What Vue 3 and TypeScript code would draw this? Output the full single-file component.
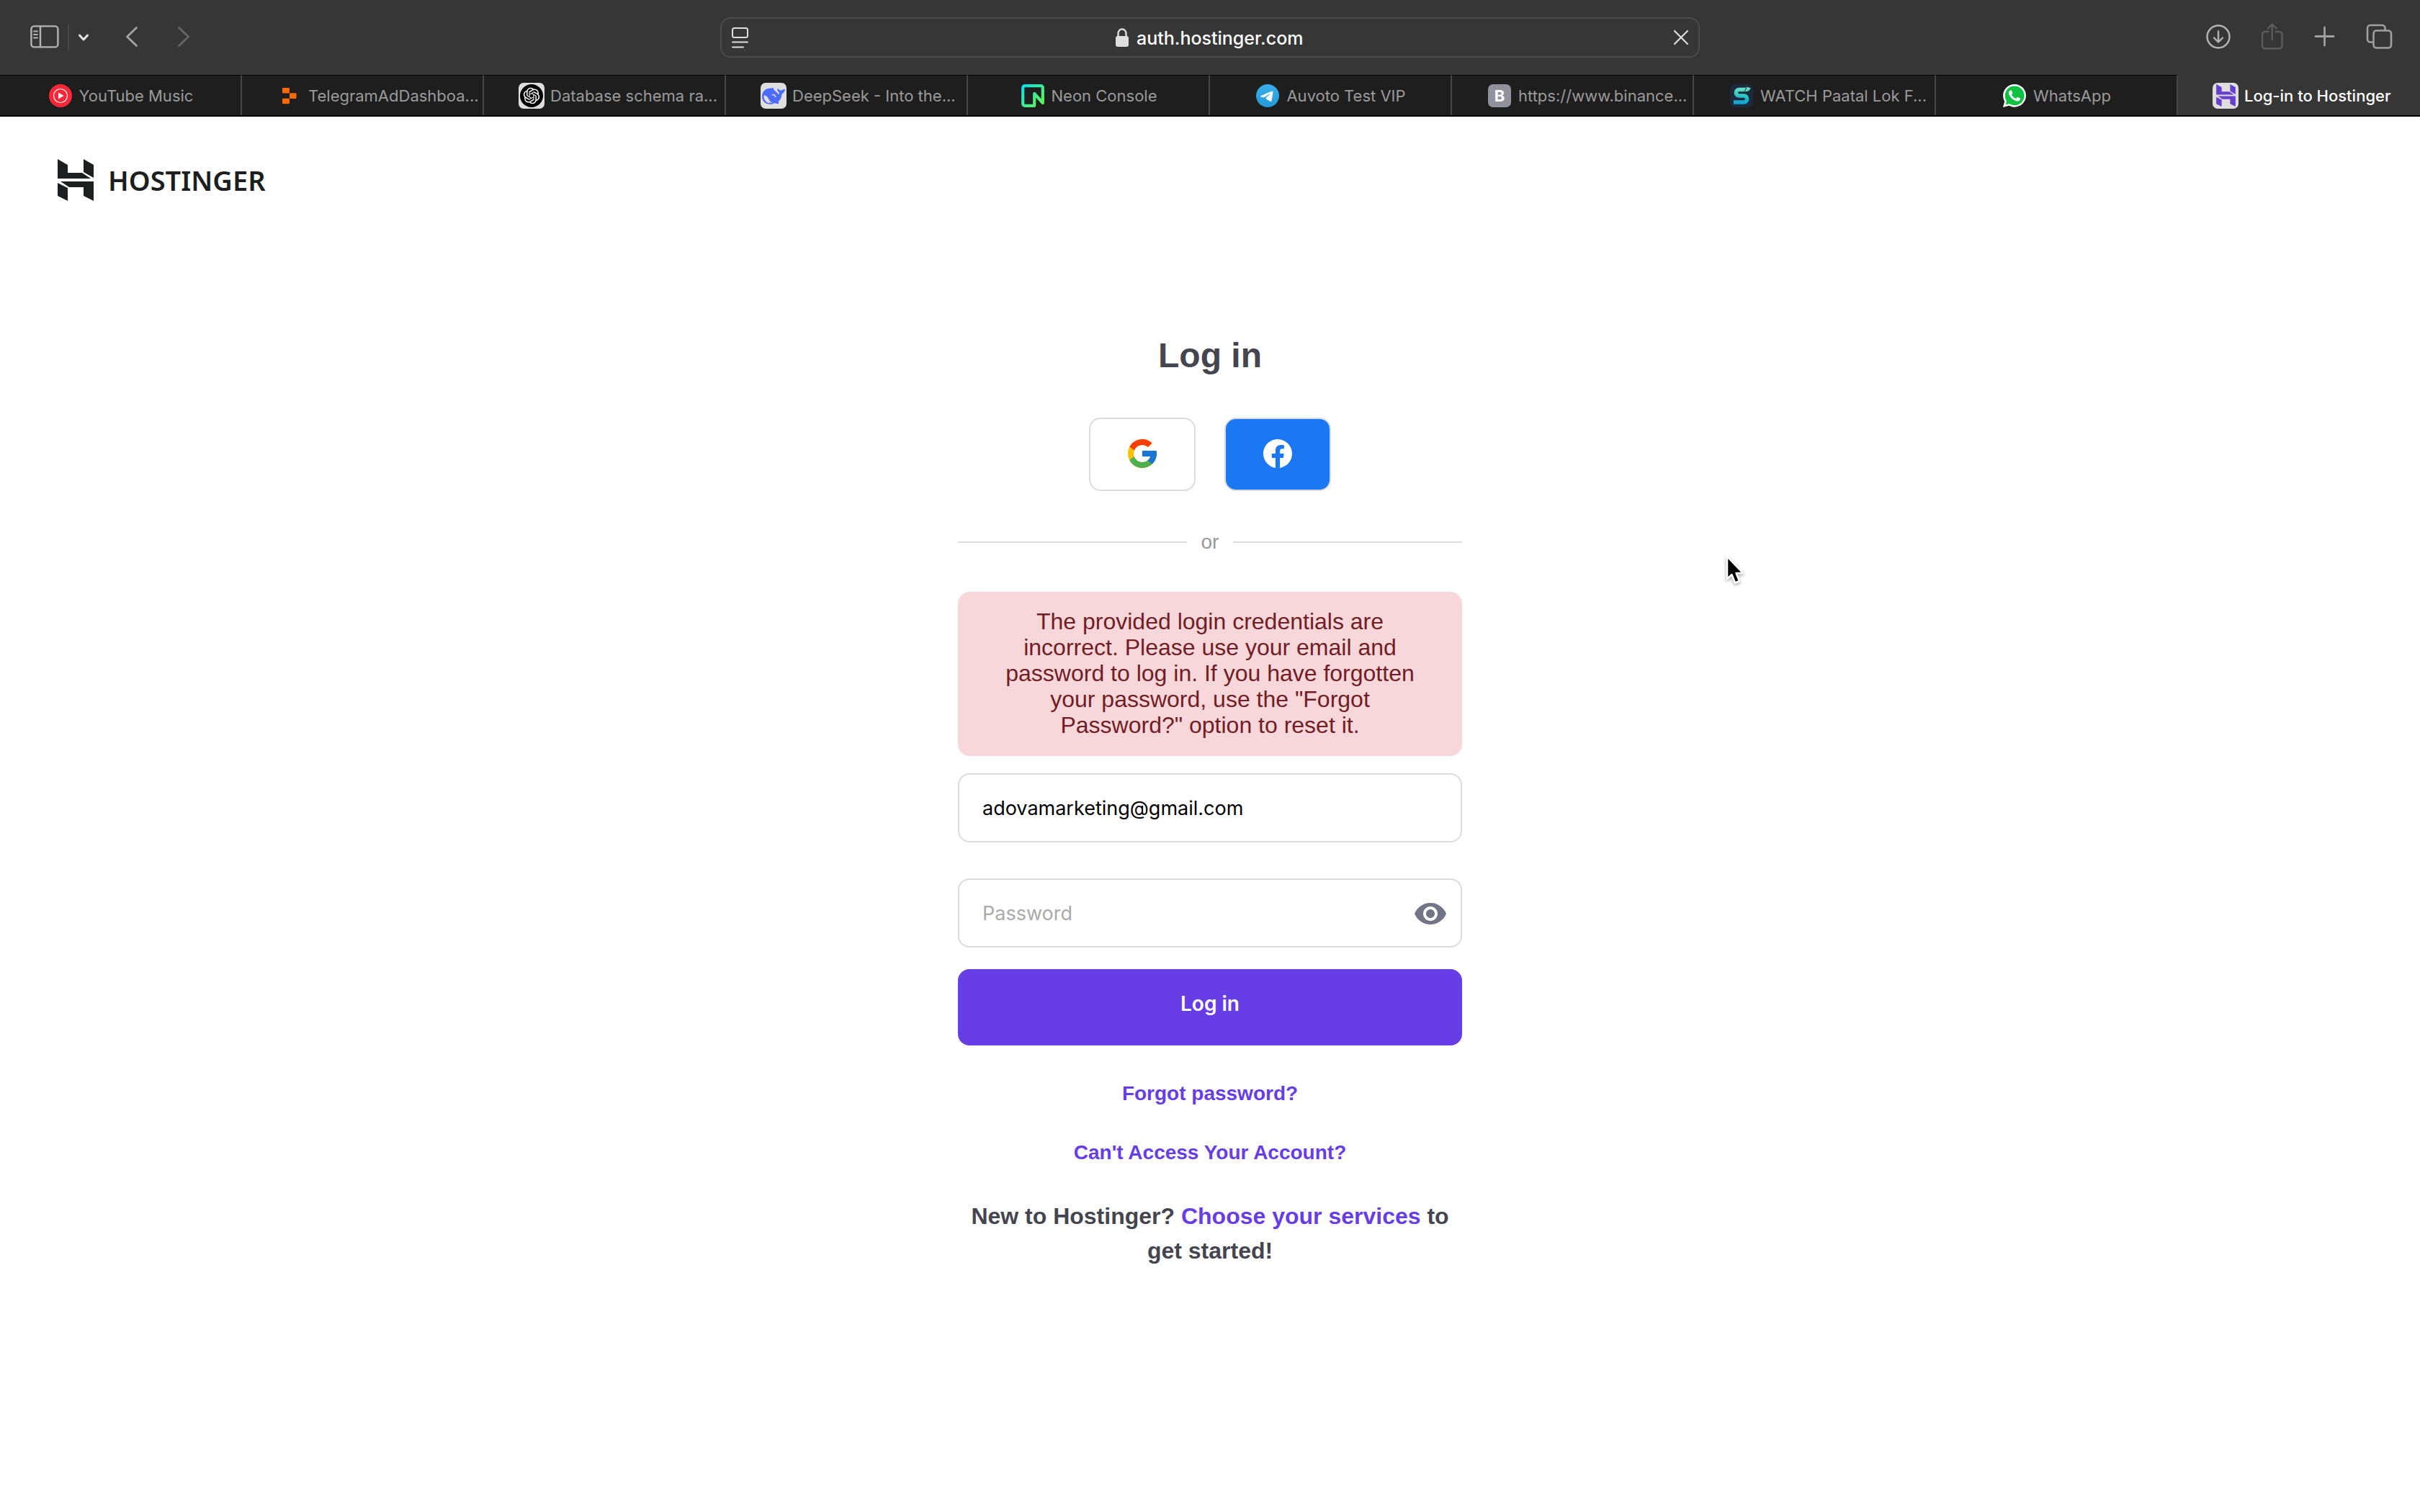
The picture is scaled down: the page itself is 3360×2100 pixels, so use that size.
<script setup lang="ts">
import { ref } from 'vue'

type IconName =
  | 'ytmusic' | 'replit' | 'openai' | 'deepseek' | 'neon'
  | 'telegram' | 'letter' | 'watch' | 'whatsapp' | 'hostinger'

interface Tab {
  title: string
  icon: IconName
  long?: boolean
  tile?: boolean
  active?: boolean
}

const tabs: Tab[] = [
  { title: 'YouTube Music', icon: 'ytmusic' },
  { title: 'TelegramAdDashboa...', icon: 'replit', long: true },
  { title: 'Database schema ra...', icon: 'openai', long: true, tile: true },
  { title: 'DeepSeek - Into the...', icon: 'deepseek', long: true, tile: true },
  { title: 'Neon Console', icon: 'neon' },
  { title: 'Auvoto Test VIP', icon: 'telegram' },
  { title: 'https://www.binance...', icon: 'letter', long: true },
  { title: 'WATCH Paatal Lok F...', icon: 'watch', long: true },
  { title: 'WhatsApp', icon: 'whatsapp' },
  { title: 'Log-in to Hostinger', icon: 'hostinger', long: true, tile: true, active: true },
]

const address = ref('auth.hostinger.com')
const email = ref('adovamarketing@gmail.com')
const password = ref('')
const showPassword = ref(false)
</script>

<template>
  <div class="window">
    <div class="toolbar">
      <div class="tools tools-left">
        <button type="button" class="tool" aria-label="Sidebar">
          <svg viewBox="0 0 40 40" width="40" height="40" fill="none" stroke="#b4b4b4" stroke-width="2.4">
            <rect x="1.4" y="4.4" width="37" height="29" rx="4" />
            <path d="M14 4.4v29" />
            <path d="M5 11.5h5M5 16h5M5 20.5h5" stroke-width="1.8" stroke-linecap="round" />
          </svg>
        </button>
        <span class="split"></span>
        <button type="button" class="tool chevron" aria-label="Tab groups">
          <svg viewBox="0 0 24 40" width="24" height="40" fill="none" stroke="#e4e4e4" stroke-width="3" stroke-linecap="round" stroke-linejoin="round">
            <path d="M6.5 17l5.5 6 5.5-6" />
          </svg>
        </button>
        <button type="button" class="tool" aria-label="Back">
          <svg viewBox="0 0 40 40" width="40" height="40" fill="none" stroke="#a4a4a4" stroke-width="2.8" stroke-linecap="round" stroke-linejoin="round">
            <path d="M25.5 6.5L12.5 19l13 12.5" />
          </svg>
        </button>
        <button type="button" class="tool forward" aria-label="Forward">
          <svg viewBox="0 0 40 40" width="40" height="40" fill="none" stroke="#666" stroke-width="2.8" stroke-linecap="round" stroke-linejoin="round">
            <path d="M12.5 6.5L25.5 19l-13 12.5" />
          </svg>
        </button>
      </div>

      <div class="address">
        <button type="button" class="tool" aria-label="Page menu">
          <svg viewBox="0 0 24 30" width="24" height="30" fill="none" stroke="#dedede" stroke-width="2">
            <rect x="1" y="2" width="21" height="13" rx="2.5" />
            <path d="M1 21.5h21M1 28.5h15" stroke-linecap="round" />
          </svg>
        </button>
        <label class="site">
          <svg viewBox="0 0 20 28" width="20" height="28" aria-label="Secure">
            <rect x="1" y="12" width="18" height="15" rx="3" fill="#dedede" />
            <path d="M4.5 13V8.5a5.5 6 0 0 1 11 0V13" fill="none" stroke="#dedede" stroke-width="2.4" />
          </svg>
          <input v-model="address" type="text" class="url" aria-label="Address" />
        </label>
        <button type="button" class="tool" aria-label="Stop loading">
          <svg viewBox="0 0 24 24" width="24" height="24" stroke="#dedede" stroke-width="2.2" stroke-linecap="round">
            <path d="M3 3l18 18M21 3L3 21" />
          </svg>
        </button>
      </div>

      <div class="tools tools-right">
        <button type="button" class="tool" aria-label="Downloads">
          <svg viewBox="0 0 40 40" width="40" height="40" fill="none" stroke="#b4b4b4" stroke-width="2.4" stroke-linecap="round" stroke-linejoin="round">
            <circle cx="18" cy="19" r="15.5" />
            <path d="M18 11.5V26M12 20.5l6 6 6-6" />
          </svg>
        </button>
        <button type="button" class="tool" aria-label="Share">
          <svg viewBox="0 0 40 40" width="40" height="40" fill="none" stroke="#5c5c5c" stroke-width="2.4" stroke-linecap="round" stroke-linejoin="round">
            <path d="M13.5 12H9a4 4 0 0 0-4 4v15.500a4 4 0 0 0 4 4h19.500a4 4 0 0 0 4-4V16a4 4 0 0 0-4-4H24" />
            <path d="M18.700 23V2M13 7.500L18.700 1.500l5.700 6" />
          </svg>
        </button>
        <button type="button" class="tool" aria-label="New tab">
          <svg viewBox="0 0 40 40" width="40" height="40" fill="none" stroke="#a0a0a0" stroke-width="2.8" stroke-linecap="round">
            <path d="M17.5 6v25M5 18.500h25" />
          </svg>
        </button>
        <button type="button" class="tool" aria-label="Tab overview">
          <svg viewBox="0 0 40 40" width="40" height="40" fill="none" stroke="#a0a0a0" stroke-width="2.6" stroke-linejoin="round">
            <rect x="11.5" y="10.5" width="24.5" height="24" rx="4" />
            <path d="M11 26.500H7a4 4 0 0 1-4-4V7a4 4 0 0 1 4-4h16.500a4 4 0 0 1 4 4v3" />
          </svg>
        </button>
      </div>
    </div>

    <nav class="tabs" aria-label="Tabs">
      <a
        v-for="tab in tabs"
        :key="tab.title"
        href="#"
        class="tab"
        :class="{ long: tab.long, active: tab.active }"
      >
        <span class="favicon" :class="{ tile: tab.tile }">
          <svg v-if="tab.icon === 'ytmusic'" viewBox="0 0 32 32" width="32" height="32">
            <circle cx="16" cy="16" r="16" fill="#ff2638" />
            <circle cx="16" cy="16" r="9.5" fill="none" stroke="#fff" stroke-width="1.2" />
            <path d="M13 11.500l7.500 4.500-7.500 4.500z" fill="#fff" />
          </svg>
          <svg v-else-if="tab.icon === 'replit'" viewBox="0 0 32 32" width="32" height="32" fill="#fa6a05">
            <rect x="6" y="5" width="10" height="7.5" rx="1.2" />
            <rect x="16" y="12.3" width="9.5" height="7.7" rx="1.2" />
            <rect x="6" y="19.8" width="10" height="7.5" rx="1.2" />
          </svg>
          <svg v-else-if="tab.icon === 'openai'" viewBox="0 0 36 36" width="36" height="36">
            <circle cx="18" cy="18" r="16" fill="#000" />
            <g transform="translate(6.700 6.700) scale(.94)" fill="#fff">
              <path d="M22.2819 9.8211a5.9847 5.9847 0 0 0-.5157-4.9108 6.0462 6.0462 0 0 0-6.5098-2.9A6.0651 6.0651 0 0 0 4.9807 4.1818a5.9847 5.9847 0 0 0-3.9977 2.9 6.0462 6.0462 0 0 0 .7427 7.0966 5.98 5.98 0 0 0 .511 4.9107 6.051 6.051 0 0 0 6.5146 2.9001A5.9847 5.9847 0 0 0 13.2599 24a6.0557 6.0557 0 0 0 5.7718-4.2058 5.9894 5.9894 0 0 0 3.9977-2.9001 6.0557 6.0557 0 0 0-.7475-7.0729zm-9.022 12.6081a4.4755 4.4755 0 0 1-2.8764-1.0408l.1419-.0804 4.7783-2.7582a.7948.7948 0 0 0 .3927-.6813v-6.7369l2.02 1.1686a.071.071 0 0 1 .038.052v5.5826a4.504 4.504 0 0 1-4.4945 4.4944zm-9.6607-4.1254a4.4708 4.4708 0 0 1-.5346-3.0137l.142.0852 4.783 2.7582a.7712.7712 0 0 0 .7806 0l5.8428-3.3685v2.3324a.0804.0804 0 0 1-.0332.0615L9.74 19.9502a4.4992 4.4992 0 0 1-6.1408-1.6464zM2.3408 7.8956a4.485 4.485 0 0 1 2.3655-1.9728V11.6a.7664.7664 0 0 0 .3879.6765l5.8144 3.3543-2.0201 1.1685a.0757.0757 0 0 1-.071 0l-4.8303-2.7865A4.504 4.504 0 0 1 2.3408 7.872zm16.5963 3.8558L13.1038 8.364 15.1192 7.2a.0757.0757 0 0 1 .071 0l4.8303 2.7913a4.4944 4.4944 0 0 1-.6765 8.1042v-5.6772a.79.79 0 0 0-.407-.667zm2.0107-3.0231l-.142-.0852-4.7735-2.7818a.7759.7759 0 0 0-.7854 0L9.409 9.2297V6.8974a.0662.0662 0 0 1 .0284-.0615l4.8303-2.7866a4.4992 4.4992 0 0 1 6.6802 4.66zM8.3065 12.863l-2.02-1.1638a.0804.0804 0 0 1-.038-.0567V6.0742a4.4992 4.4992 0 0 1 7.3757-3.4537l-.142.0805L8.704 5.459a.7948.7948 0 0 0-.3927.6813zm1.0976-2.3654l2.602-1.4998 2.6069 1.4998v2.9994l-2.5974 1.4997-2.6067-1.4997Z" />
            </g>
          </svg>
          <svg v-else-if="tab.icon === 'deepseek'" viewBox="0 0 36 36" width="36" height="36">
            <path fill="#4d6bfe" d="M2 19C2 12 7 7.500 14 7.500L18 7c-.5 2 1 3 2.500 4.500 2 2 3.500 3.500 5 4.500.5-1 .7-1.500.3-2.500C23.500 12 23 9.800 23.600 8c1.900.5 2.400 3 4.900 2.600 2-.4 3-1.800 5.500-1.800-.5 4.200-3 6.200-4.500 6.700 0 4.500-2 8-5 11l1 2c-2 1-4 .3-6-.5-2 1.300-4 1.800-6 1.800C6.500 29.800 2 25 2 19z" />
            <path fill="#dedede" d="M4.500 17.500C8 17 10 20 11.500 23c1 2 2.500 4 5 4.800-2 .7-3-.3-4-1.300-.5.5.5 1.500 0 2C8 28 4 23 4.500 17.500z" />
            <path d="M16.500 16.500c2.200-.3 3.800 1 4.300 3" fill="none" stroke="#dedede" stroke-width="1.4" stroke-linecap="round" />
          </svg>
          <svg v-else-if="tab.icon === 'neon'" viewBox="0 0 32 32" width="32" height="32">
            <defs>
              <linearGradient id="neon-stroke" x1="0" y1="0" x2="1" y2="1">
                <stop offset="0" stop-color="#0be0e0" />
                <stop offset=".55" stop-color="#42ec8c" />
                <stop offset="1" stop-color="#63f655" />
              </linearGradient>
            </defs>
            <path d="M5 2.200h22a2.800 2.800 0 0 1 2.800 2.800v21L18.200 13v16.800H5A2.800 2.800 0 0 1 2.200 27V5A2.800 2.800 0 0 1 5 2.200z" fill="none" stroke="url(#neon-stroke)" stroke-width="4.2" stroke-linejoin="round" />
          </svg>
          <svg v-else-if="tab.icon === 'telegram'" viewBox="0 0 24 24" width="32" height="32">
            <defs>
              <linearGradient id="telegram-fill" x1="0" y1="0" x2="0" y2="1">
                <stop offset="0" stop-color="#38aeea" />
                <stop offset="1" stop-color="#259ad6" />
              </linearGradient>
            </defs>
            <circle cx="12" cy="12" r="12" fill="url(#telegram-fill)" />
            <path fill="#fff" d="M16.906 7.224c.1-.002.321.023.465.14a.506.506 0 0 1 .171.325c.016.093.036.306.02.472-.18 1.898-.962 6.502-1.36 8.627-.168.9-.499 1.201-.82 1.230-.696.065-1.225-.46-1.900-.902-1.056-.693-1.653-1.124-2.678-1.800-1.185-.78-.417-1.210.258-1.910.177-.184 3.247-2.977 3.307-3.230.007-.032.014-.15-.056-.212s-.174-.041-.249-.024c-.106.024-1.793 1.140-5.061 3.345-.48.33-.913.49-1.302.48-.428-.008-1.252-.241-1.865-.44-.752-.245-1.349-.374-1.297-.789.027-.216.325-.437.893-.663 3.498-1.524 5.830-2.529 6.998-3.014 3.332-1.386 4.025-1.627 4.476-1.635z" />
          </svg>
          <span v-else-if="tab.icon === 'letter'" class="letter">B</span>
          <svg v-else-if="tab.icon === 'watch'" viewBox="0 0 32 32" width="32" height="32">
            <defs>
              <linearGradient id="watch-stroke" x1="0" y1="0" x2="0" y2="1">
                <stop offset="0" stop-color="#6fe0bf" />
                <stop offset=".6" stop-color="#2cc3c6" />
                <stop offset="1" stop-color="#12a6cf" />
              </linearGradient>
            </defs>
            <rect width="32" height="32" rx="7" fill="#1b2a3d" />
            <path d="M26 4.500c-.5 2-2 3-5 3h-8.500a4 4 0 0 0-4 4v.5a4 4 0 0 0 4 4h7a4 4 0 0 1 4 4v1a4 4 0 0 1-4 4H5" fill="none" stroke="url(#watch-stroke)" stroke-width="5.5" stroke-linejoin="round" />
            <path d="M23 4.500l-3 6" stroke="#1b2a3d" stroke-width="1" />
          </svg>
          <svg v-else-if="tab.icon === 'whatsapp'" viewBox="0 0 24 24" width="32" height="32">
            <path fill="#fff" d="M20.520 3.449C18.240 1.245 15.240 0 12.045 0 5.463 0 .104 5.334.101 11.893c0 2.096.549 4.140 1.595 5.945L0 24l6.335-1.652a12.062 12.062 0 005.710 1.447h.006c6.585 0 11.946-5.336 11.949-11.896 0-3.176-1.240-6.165-3.480-8.450z" />
            <path fill="#0fc143" d="M12.050 1.900a10 10 0 0 0-8.300 15.500L2.700 21.300l4-1.050A10 10 0 1 0 12.050 1.900z" />
            <path fill="#fff" d="M17.472 14.382c-.297-.149-1.758-.867-2.030-.967-.273-.099-.471-.148-.67.15-.197.297-.767.966-.94 1.164-.173.199-.347.223-.644.075-.297-.15-1.255-.463-2.390-1.475-.883-.788-1.480-1.761-1.653-2.059-.173-.297-.018-.458.13-.606.134-.133.298-.347.446-.52.149-.174.198-.298.298-.497.099-.198.05-.371-.025-.52-.075-.149-.669-1.612-.916-2.207-.242-.579-.487-.5-.669-.51-.173-.008-.371-.01-.57-.01-.198 0-.52.074-.792.372-.272.297-1.040 1.016-1.040 2.479 0 1.462 1.065 2.875 1.213 3.074.149.198 2.096 3.200 5.077 4.487.709.306 1.262.489 1.694.625.712.227 1.360.195 1.871.118.571-.085 1.758-.719 2.006-1.413.248-.694.248-1.289.173-1.413-.074-.124-.272-.198-.57-.347" />
          </svg>
          <svg v-else viewBox="0 0 50 58" width="27" height="31" fill="#673fcf">
            <path d="M0 0l14 8v11h20l12 8H0zM36 0l14 8v18l-14-8zM0 33l14 7v18L0 51zM4 31h46v27l-14-7V39H16z" />
          </svg>
        </span>
        <span class="tab-title">{{ tab.title }}</span>
      </a>
    </nav>

    <header class="header">
      <a href="#" class="brand" aria-label="Hostinger">
        <svg viewBox="0 0 50 58" width="50" height="58" fill="#1d1e20">
          <path d="M0 0l14 8v11h20l12 8H0zM36 0l14 8v18l-14-8zM0 33l14 7v18L0 51zM4 31h46v27l-14-7V39H16z" />
        </svg>
        <span class="brand-name">HOSTINGER</span>
      </a>
    </header>

    <main class="login">
      <h1 class="title">Log in</h1>

      <div class="socials">
        <button type="button" class="social" aria-label="Log in with Google">
          <svg viewBox="4 4 40 40" width="40" height="40">
            <path fill="#ffc107" d="M43.611 20.083H42V20H24v8h11.303c-1.649 4.657-6.080 8-11.303 8-6.627 0-12-5.373-12-12s5.373-12 12-12c3.059 0 5.842 1.154 7.961 3.039l5.657-5.657C34.046 6.053 29.268 4 24 4 12.955 4 4 12.955 4 24s8.955 20 20 20 20-8.955 20-20c0-1.341-.138-2.650-.389-3.917z" />
            <path fill="#ff3d00" d="M6.306 14.691l6.571 4.819C14.655 15.108 18.961 12 24 12c3.059 0 5.842 1.154 7.961 3.039l5.657-5.657C34.046 6.053 29.268 4 24 4 16.318 4 9.656 8.337 6.306 14.691z" />
            <path fill="#4caf50" d="M24 44c5.166 0 9.860-1.977 13.409-5.192l-6.190-5.238C29.211 35.091 26.715 36 24 36c-5.202 0-9.619-3.317-11.283-7.946l-6.522 5.025C9.505 39.556 16.227 44 24 44z" />
            <path fill="#1976d2" d="M43.611 20.083H42V20H24v8h11.303c-.792 2.237-2.231 4.166-4.087 5.571l.003-.002 6.190 5.238C36.971 39.205 44 34 44 24c0-1.341-.138-2.650-.389-3.917z" />
          </svg>
        </button>
        <button type="button" class="social facebook" aria-label="Log in with Facebook">
          <svg viewBox="0 0 24 24" width="40" height="40" fill="#fff">
            <path d="M24 12.073c0-6.627-5.373-12-12-12s-12 5.373-12 12c0 5.990 4.388 10.954 10.125 11.854v-8.385H7.078v-3.470h3.047V9.430c0-3.007 1.792-4.669 4.533-4.669 1.312 0 2.686.235 2.686.235v2.953H15.830c-1.491 0-1.956.925-1.956 1.874v2.250h3.328l-.532 3.470h-2.796v8.385C19.612 23.027 24 18.062 24 12.073z" />
          </svg>
        </button>
      </div>

      <div class="divider"><span>or</span></div>

      <form class="form" @submit.prevent>
        <p class="alert" role="alert">
          The provided login credentials are incorrect. Please use your email and password to log in.
          If you have forgotten your password, use the "Forgot Password?" option to reset it.
        </p>
        <label class="field">
          <input v-model="email" type="text" class="input" aria-label="Email" />
        </label>
        <label class="field field-password">
          <input
            v-model="password"
            :type="showPassword ? 'text' : 'password'"
            class="input"
            placeholder="Password"
            aria-label="Password"
          />
          <button type="button" class="tool" aria-label="Show password" @click="showPassword = !showPassword">
            <svg viewBox="0 0 24 24" width="48" height="48" fill="#727586">
              <path d="M12 4.500C7 4.500 2.730 7.610 1 12c1.730 4.390 6 7.500 11 7.500s9.270-3.110 11-7.500c-1.730-4.390-6-7.500-11-7.500zM12 17c-2.760 0-5-2.240-5-5s2.240-5 5-5 5 2.240 5 5-2.240 5-5 5zm0-8c-1.660 0-3 1.340-3 3s1.340 3 3 3 3-1.340 3-3-1.340-3-3-3z" />
            </svg>
          </button>
        </label>
        <button type="submit" class="submit">Log in</button>
      </form>

      <a href="#" class="link forgot">Forgot password?</a>
      <a href="#" class="link access">Can't Access Your Account?</a>
      <p class="signup">New to Hostinger? <a href="#">Choose your services</a> to get started!</p>
    </main>

    <svg class="cursor" viewBox="0 0 28 44" width="28" height="44" aria-hidden="true">
      <path d="M2 2v31l6.500-6 4.500 11.500 6-2.500-4.500-11H24z" fill="#000" stroke="#fff" stroke-width="2.5" stroke-linejoin="round" />
    </svg>
  </div>
</template>

<style>
body {
  margin: 0;
  background: #fff;
}
</style>

<style scoped>
.window {
  position: relative;
  min-height: 100vh;
  background: #fff;
  color: #45454f;
  font-family: 'Liberation Sans', Arial, sans-serif;
}

svg {
  display: block;
  flex: none;
}

a {
  color: #673de6;
  text-decoration: none;
}

.tool {
  display: block;
  flex: none;
  padding: 0;
  border: 0;
  background: none;
}

/* Browser toolbar */
.toolbar {
  display: grid;
  grid-template-columns: minmax(0, 1fr) minmax(0, 1360px) minmax(0, 1fr);
  align-items: center;
  height: 104px;
  background: #363636;
}

.tools {
  display: flex;
  align-items: center;
}

.tools-left {
  padding-left: 42px;
}

.tools-right {
  justify-content: flex-end;
  gap: 34px;
  padding-right: 36px;
}

.split {
  width: 2px;
  height: 36px;
  margin: 0 8px 0 12px;
  background: #484848;
}

.chevron {
  margin-right: 36px;
}

.forward {
  margin-left: 32px;
}

.address {
  display: flex;
  align-items: center;
  justify-content: space-between;
  box-sizing: border-box;
  height: 56px;
  padding: 0 12px 0 14px;
  border: 2px solid #4b4b4b;
  border-radius: 14px;
}

.site {
  display: flex;
  align-items: center;
  gap: 10px;
}

.url {
  width: 236px;
  padding: 2px 0 0;
  border: 0;
  outline: 0;
  background: none;
  color: #fff;
  font: 500 25px/32px Inter, sans-serif;
}

/* Tab strip */
.tabs {
  display: grid;
  grid-auto-columns: minmax(0, 1fr);
  grid-auto-flow: column;
  box-sizing: border-box;
  height: 58px;
  border-bottom: 2px solid #000;
  background: #1e1e1e;
}

.tab {
  display: flex;
  align-items: center;
  justify-content: center;
  gap: 8px;
  border-top: 1px solid #000;
  border-right: 2px solid #464646;
  color: #9a9a9a;
  font: 400 22px/28px Inter, sans-serif;
  white-space: nowrap;
}

.tab.long {
  justify-content: flex-start;
  padding-left: 48px;
}

.tab.active {
  border-color: #363636;
  background: #363636;
  color: #fff;
  font-weight: 500;
}

.favicon {
  display: flex;
  flex: none;
  align-items: center;
  justify-content: center;
  width: 36px;
  height: 36px;
  border-radius: 7px;
}

.favicon.tile {
  background: #dedede;
}

.letter {
  width: 32px;
  height: 32px;
  border-radius: 7px;
  background: #92929f;
  color: #fff;
  font: 700 22px/32px Inter, sans-serif;
  text-align: center;
}

/* Page header */
.header {
  display: flex;
  padding: 58px 80px 0;
}

.brand {
  display: flex;
  align-items: center;
  gap: 20px;
  height: 60px;
}

.brand-name {
  color: #1d1e20;
  font: 600 38px/60px 'Noto Sans', sans-serif;
}

/* Login column */
.login {
  display: flex;
  flex-direction: column;
  align-items: center;
  max-width: 700px;
  margin: 0 auto;
  padding: 184px 0 80px;
}

.title {
  margin: 0;
  font-size: 48px;
  line-height: 60px;
}

.socials {
  display: flex;
  gap: 40px;
  margin-top: 56px;
}

.social {
  display: flex;
  align-items: center;
  justify-content: center;
  box-sizing: border-box;
  width: 148px;
  height: 102px;
  padding: 0 0 2px;
  border: 2px solid #dadce0;
  border-radius: 16px;
  background: #fff;
}

.social.facebook {
  background: #1b77f2;
}

.divider {
  display: flex;
  align-items: center;
  gap: 20px;
  align-self: stretch;
  margin-top: 55px;
  color: #999;
  font-size: 28px;
  line-height: 32px;
}

.divider::before,
.divider::after {
  flex: 1;
  height: 2px;
  background: #dadce0;
  content: '';
}

.form {
  display: flex;
  flex-direction: column;
  align-self: stretch;
  margin-top: 53px;
}

.alert {
  margin: 0 0 24px;
  padding: 23px 48px 25px;
  border-radius: 16px;
  background: #f8d7da;
  color: #721c24;
  font-size: 32px;
  line-height: 36px;
  text-align: center;
}

.field {
  display: flex;
  align-items: center;
  box-sizing: border-box;
  height: 96px;
  padding: 2px 18px 0 32px;
  border: 2px solid #dadce0;
  border-radius: 16px;
}

.field-password {
  margin: 50px 0 30px;
}

.input {
  flex: 1;
  min-width: 0;
  padding: 0;
  border: 0;
  outline: 0;
  background: none;
  color: #000;
  font: 400 27px/40px Inter, sans-serif;
}

.input::placeholder {
  color: #aaa;
  opacity: 1;
}

.submit {
  height: 106px;
  padding: 0 0 10px;
  border: 0;
  border-radius: 16px;
  background: #673de6;
  color: #fff;
  font: 600 28px/40px Inter, sans-serif;
}

.link {
  font-size: 28px;
  font-weight: 700;
  line-height: 40px;
}

.forgot {
  margin-top: 47px;
}

.access {
  margin-top: 42px;
}

.signup {
  margin: 44px 0 0;
  font-size: 32px;
  font-weight: 700;
  line-height: 48px;
  text-align: center;
}

/* Mouse pointer over the page */
.cursor {
  position: absolute;
  top: 771px;
  left: 2396px;
  filter: drop-shadow(0 2px 2px rgba(0, 0, 0, 0.35));
}
</style>
